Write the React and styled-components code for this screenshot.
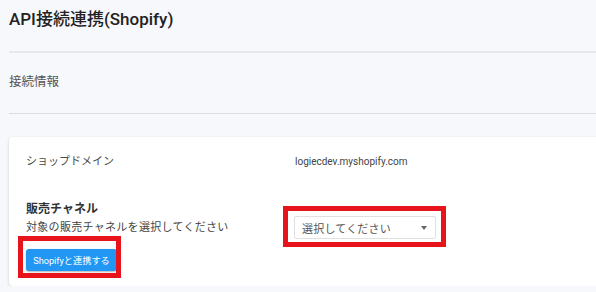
import styled, { createGlobalStyle } from 'styled-components';

const GlobalStyle = createGlobalStyle`
    html, body {
        margin: 0;
        padding: 0;
        background: #f7f8fc;
        overflow: hidden;
    }
    body {
        font-family: Roboto, "Noto Sans CJK JP", sans-serif;
        color: #333;
    }
`;

const Page = styled.div`
    padding-left: 9px;
    width: 620px;
`;

const Header = styled.div`
    padding: 7px 0 20px;
    border-bottom: 2px solid #e7e8ec;
`;

const Title = styled.h1`
    margin: 0;
    font-size: 17px;
    line-height: 24px;
    height: 24px;
    font-weight: 500;
    color: #222;
`;

const Section = styled.div`
    padding: 19px 0 21px;
    border-bottom: 1px solid #dcdde1;
`;

const SectionTitle = styled.div`
    font-size: 12.5px;
    line-height: 20px;
    height: 20px;
    color: #555;
`;

const Card = styled.div`
    margin-top: 23px;
    background: #fff;
    border-radius: 4px;
    box-shadow: 0 1px 3px rgba(0, 0, 0, 0.18);
    padding: 16px 0 15px 17px;
    display: grid;
    grid-template-columns: 268px 1fr;
    row-gap: 29px;
`;

const Label = styled.div`
    font-size: 11px;
    line-height: 18px;
    height: 18px;
    color: #4a4a4a;
`;

const Value = styled.div`
    font-size: 10px;
    line-height: 18px;
    height: 18px;
    color: #444;
`;

const FieldBlock = styled.div`
    display: flex;
    flex-direction: column;
    align-items: flex-start;
`;

const FieldTitle = styled.div`
    font-size: 12px;
    line-height: 18px;
    height: 18px;
    font-weight: 700;
    color: #333;
`;

const FieldHint = styled.div`
    margin-top: 1px;
    font-size: 11px;
    line-height: 18px;
    height: 18px;
    color: #444;
    letter-spacing: 0.3px;
`;

const Highlight = styled.div`
    position: relative;
    display: inline-block;
    margin-top: ${(p) => p.$mt || 0}px;

    &::after {
        content: '';
        position: absolute;
        top: -${(p) => p.$t}px;
        right: -${(p) => p.$r}px;
        bottom: -${(p) => p.$b}px;
        left: -${(p) => p.$l}px;
        border: 5px solid #e8141c;
        pointer-events: none;
    }
`;

const Button = styled.button`
    display: block;
    width: 91px;
    height: 22px;
    padding: 0;
    border: none;
    border-radius: 3px;
    background: #2196f3;
    color: #fff;
    font-family: Roboto, "Noto Sans CJK JP", sans-serif;
    font-size: 9.2px;
    box-shadow: 0 1px 2px rgba(0, 0, 0, 0.3);
    cursor: pointer;
`;

const Select = styled.div`
    box-sizing: border-box;
    width: 142px;
    height: 23px;
    border: 1px solid #e0e0e0;
    border-radius: 2px;
    background: #fff;
    display: flex;
    align-items: center;
    justify-content: space-between;
    padding: 0 8px 0 7px;
    font-size: 11px;
    color: #555;
    letter-spacing: 0.2px;
`;

const Caret = styled.span`
    width: 0;
    height: 0;
    border-left: 3.5px solid transparent;
    border-right: 3.5px solid transparent;
    border-top: 4px solid #666;
    margin-top: 1px;
`;

const ValueCell = styled.div`
    padding-left: 1px;
`;

export default function App() {
    return (
        <>
            <GlobalStyle />
            <Page>
                <Header>
                    <Title>API接続連携(Shopify)</Title>
                </Header>
                <Section>
                    <SectionTitle>接続情報</SectionTitle>
                </Section>
                <Card>
                    <Label>ショップドメイン</Label>
                    <ValueCell>
                        <Value>logiecdev.myshopify.com</Value>
                    </ValueCell>

                    <FieldBlock>
                        <FieldTitle>販売チャネル</FieldTitle>
                        <FieldHint>対象の販売チャネルを選択してください</FieldHint>
                        <Highlight $mt={12} $t={13} $r={4} $b={7} $l={8}>
                            <Button type="button">Shopifyと連携する</Button>
                        </Highlight>
                    </FieldBlock>
                    <div>
                        <Highlight $mt={16} $t={10} $r={10} $b={8} $l={11}>
                            <Select>
                                <span>選択してください</span>
                                <Caret />
                            </Select>
                        </Highlight>
                    </div>
                </Card>
            </Page>
        </>
    );
}
